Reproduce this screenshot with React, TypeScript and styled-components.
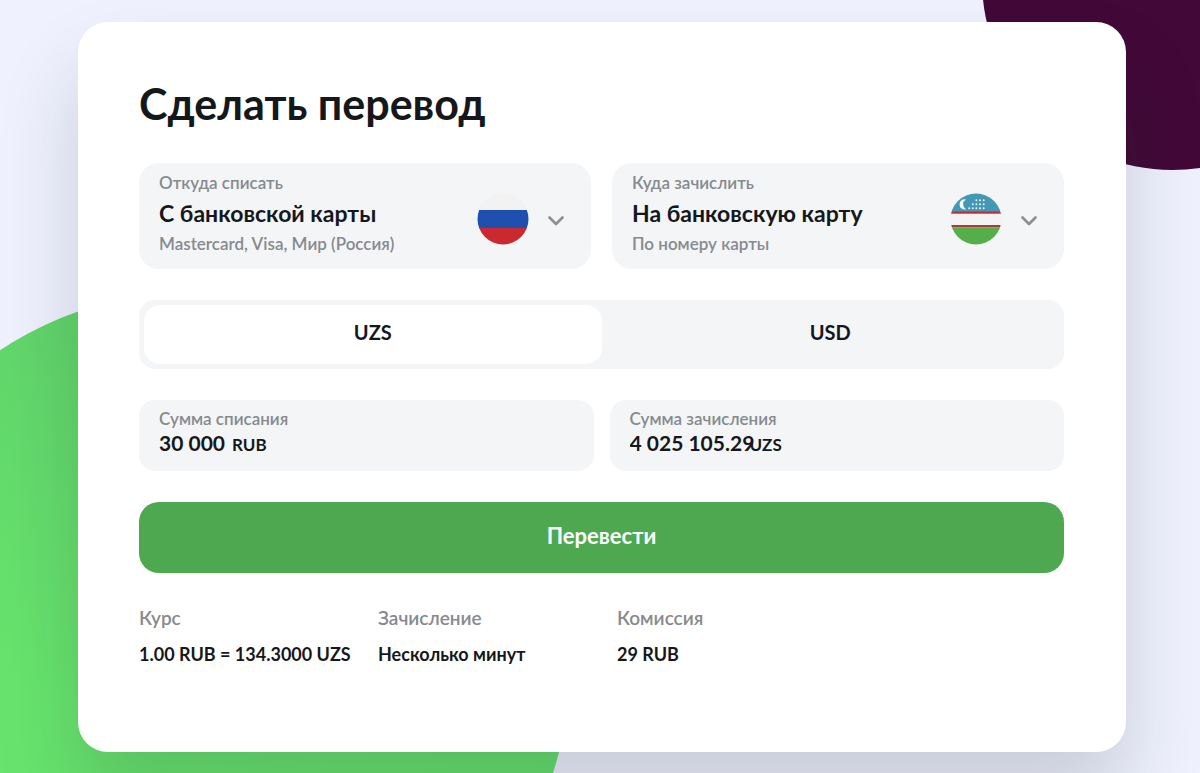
import React, { useState } from "react";
import styled, { createGlobalStyle } from "styled-components";

const GlobalStyle = createGlobalStyle`
  *, *::before, *::after { box-sizing: border-box; }
  body {
    margin: 0;
    background: #eff1fe;
    color: #15181b;
    font-family: Lato, "Noto Sans", sans-serif;
  }
  button, input, select { font: inherit; color: inherit; }
`;

const Page = styled.main`
  position: relative;
  min-height: 100vh;
  padding: 22px 74px 20px 78px;
  overflow: hidden;
`;

const Circle = styled.div<{ $size: number }>`
  position: absolute;
  width: ${(p) => p.$size}px;
  height: ${(p) => p.$size}px;
  border-radius: 50%;
`;

const GreenCircle = styled(Circle)`
  left: -167px;
  top: 290px;
  background: linear-gradient(200deg, #5fd06a 10%, #68e46e 60%);
`;

const PurpleCircle = styled(Circle)`
  right: -162px;
  top: -210px;
  background: #420938;
`;

const Card = styled.form`
  position: relative;
  display: flex;
  flex-direction: column;
  padding: 52px 62px 86px 61px;
  border-radius: 30px;
  background: #fff;
  box-shadow: 0 50px 80px rgba(20, 30, 36, 0.17);
`;

const Title = styled.h1`
  margin: 0 0 29px;
  font-size: 43px;
  line-height: 60px;
  font-weight: 700;
`;

const Row = styled.div<{ $gap: number }>`
  display: grid;
  grid-template-columns: 1fr 1fr;
  gap: ${(p) => p.$gap}px;
  margin-bottom: 31px;
`;

const MethodBox = styled.label`
  display: flex;
  align-items: center;
  height: 106px;
  padding: 0 25px 0 20px;
  border-radius: 20px;
  background: #f3f5f7;
  cursor: pointer;
`;

const MethodText = styled.span`
  display: flex;
  flex: 1;
  flex-direction: column;
  min-width: 0;
  padding-bottom: 5px;
`;

const Caption = styled.span`
  color: #868a8e;
  font-size: 17px;
  line-height: 20px;
  font-weight: 600;
`;

const MethodSelect = styled.select`
  appearance: none;
  height: 30px;
  margin: 5px 0 6px;
  padding: 0;
  border: 0;
  background: none;
  font-size: 23px;
  font-weight: 700;
`;

const Flag = styled.svg`
  flex: none;
  width: 52px;
  height: 52px;
  margin: 6px 17px 0 0;
`;

const Chevron = styled.svg`
  flex: none;
  width: 20px;
  height: 20px;
  margin-top: 10px;
`;

const Tabs = styled.div`
  display: grid;
  grid-template-columns: 1fr 1fr;
  height: 69px;
  margin-bottom: 31px;
  padding: 5px;
  border-radius: 16px;
  background: #f3f5f7;
`;

const Tab = styled.button<{ $active: boolean }>`
  padding: 0 0 6px;
  border: 0;
  border-radius: 16px;
  background: ${(p) => (p.$active ? "#fff" : "transparent")};
  font-size: 20px;
  font-weight: 700;
  cursor: pointer;
`;

const AmountBox = styled.label`
  display: flex;
  flex-direction: column;
  height: 71px;
  padding: 9px 20px;
  border-radius: 16px;
  background: #f3f5f7;
`;

const AmountLine = styled.span`
  display: flex;
  align-items: baseline;
  font-size: 17px;
  line-height: 28px;
  font-weight: 700;
`;

const AmountInput = styled.input<{ $width: number }>`
  width: ${(p) => p.$width}px;
  height: 28px;
  margin-right: -4px;
  padding: 0;
  border: 0;
  background: none;
  outline: none;
  font-size: 21px;
`;

const Submit = styled.button`
  height: 71px;
  padding: 0 0 4px;
  border: 0;
  border-radius: 20px;
  background: #4da850;
  color: #fff;
  font-size: 22px;
  font-weight: 700;
  cursor: pointer;
`;

const Facts = styled.dl`
  display: flex;
  margin: 33px 0 0;
`;

const Fact = styled.div`
  width: 239px;
  line-height: 24px;
`;

const FactName = styled.dt`
  margin-bottom: 12px;
  color: #868a8e;
  font-size: 19px;
  font-weight: 600;
`;

const FactValue = styled.dd`
  margin: 0;
  font-size: 18px;
  font-weight: 700;
`;

const RussiaFlag = () => (
  <Flag viewBox="0 0 52 52" aria-hidden="true">
    <clipPath id="ru"><circle cx="26" cy="26" r="25.5" /></clipPath>
    <g clipPath="url(#ru)">
      <rect width="52" height="17" fill="#f1f2f1" />
      <rect y="17" width="52" height="18" fill="#1f50b0" />
      <rect y="35" width="52" height="17" fill="#c9292f" />
    </g>
  </Flag>
);

const stars = [
  [26.4, 7.2], [30, 7.2], [33.7, 7.2],
  [22.8, 11.2], [26.4, 11.2], [30, 11.2], [33.7, 11.2],
  [19.2, 15.2], [22.8, 15.2], [26.4, 15.2], [30, 15.2], [33.7, 15.2],
];

const UzbekistanFlag = () => (
  <Flag viewBox="0 0 52 52" aria-hidden="true">
    <clipPath id="uz"><circle cx="26" cy="26" r="25.5" /></clipPath>
    <g clipPath="url(#uz)">
      <rect width="52" height="19" fill="#4398b4" />
      <rect y="19" width="52" height="15" fill="#f3f3f2" />
      <rect y="18.5" width="52" height="2.2" fill="#c8283a" />
      <rect y="32" width="52" height="2.2" fill="#a93a35" />
      <rect y="34.2" width="52" height="18" fill="#56ae4b" />
      <path d="M16 6.4a5.1 5.1 0 1 0 0 9.8a5.6 5.6 0 0 1 0-9.8z" fill="#f5f8f9" />
      {stars.map(([x, y]) => (
        <circle key={`${x}-${y}`} cx={x} cy={y} r="1" fill="#e8f1f5" />
      ))}
    </g>
  </Flag>
);

const Arrow = () => (
  <Chevron viewBox="0 0 20 20" fill="none" stroke="#8a8e91" strokeWidth="2.6" strokeLinecap="round" strokeLinejoin="round" aria-hidden="true">
    <path d="M3.5 6.5L10 13l6.5-6.5" />
  </Chevron>
);

interface MethodProps {
  caption: string;
  value: string;
  hint: string;
  flag: React.ReactNode;
}

const Method = ({ caption, value, hint, flag }: MethodProps) => (
  <MethodBox>
    <MethodText>
      <Caption>{caption}</Caption>
      <MethodSelect defaultValue={value}>
        <option>{value}</option>
      </MethodSelect>
      <Caption>{hint}</Caption>
    </MethodText>
    {flag}
    <Arrow />
  </MethodBox>
);

interface AmountProps {
  caption: string;
  value: string;
  currency: string;
  width: number;
}

const Amount = ({ caption, value, currency, width }: AmountProps) => (
  <AmountBox>
    <Caption>{caption}</Caption>
    <AmountLine>
      <AmountInput defaultValue={value} inputMode="decimal" $width={width} />
      {currency}
    </AmountLine>
  </AmountBox>
);

const facts = [
  ["Курс", "1.00 RUB = 134.3000 UZS"],
  ["Зачисление", "Несколько минут"],
  ["Комиссия", "29 RUB"],
];

export default function App() {
  const [currency, setCurrency] = useState("UZS");
  return (
    <Page>
      <GlobalStyle />
      <GreenCircle $size={738} />
      <PurpleCircle $size={380} />
      <Card onSubmit={(e) => e.preventDefault()}>
        <Title>Сделать перевод</Title>
        <Row $gap={21}>
          <Method caption="Откуда списать" value="С банковской карты" hint="Mastercard, Visa, Мир (Россия)" flag={<RussiaFlag />} />
          <Method caption="Куда зачислить" value="На банковскую карту" hint="По номеру карты" flag={<UzbekistanFlag />} />
        </Row>
        <Tabs>
          {["UZS", "USD"].map((code) => (
            <Tab key={code} type="button" $active={currency === code} aria-pressed={currency === code} onClick={() => setCurrency(code)}>
              {code}
            </Tab>
          ))}
        </Tabs>
        <Row $gap={16}>
          <Amount caption="Сумма списания" value="30 000" currency="RUB" width={77} />
          <Amount caption="Сумма зачисления" value="4 025 105.29" currency={currency} width={124} />
        </Row>
        <Submit type="submit">Перевести</Submit>
        <Facts>
          {facts.map(([name, value]) => (
            <Fact key={name}>
              <FactName>{name}</FactName>
              <FactValue>{value}</FactValue>
            </Fact>
          ))}
        </Facts>
      </Card>
    </Page>
  );
}
